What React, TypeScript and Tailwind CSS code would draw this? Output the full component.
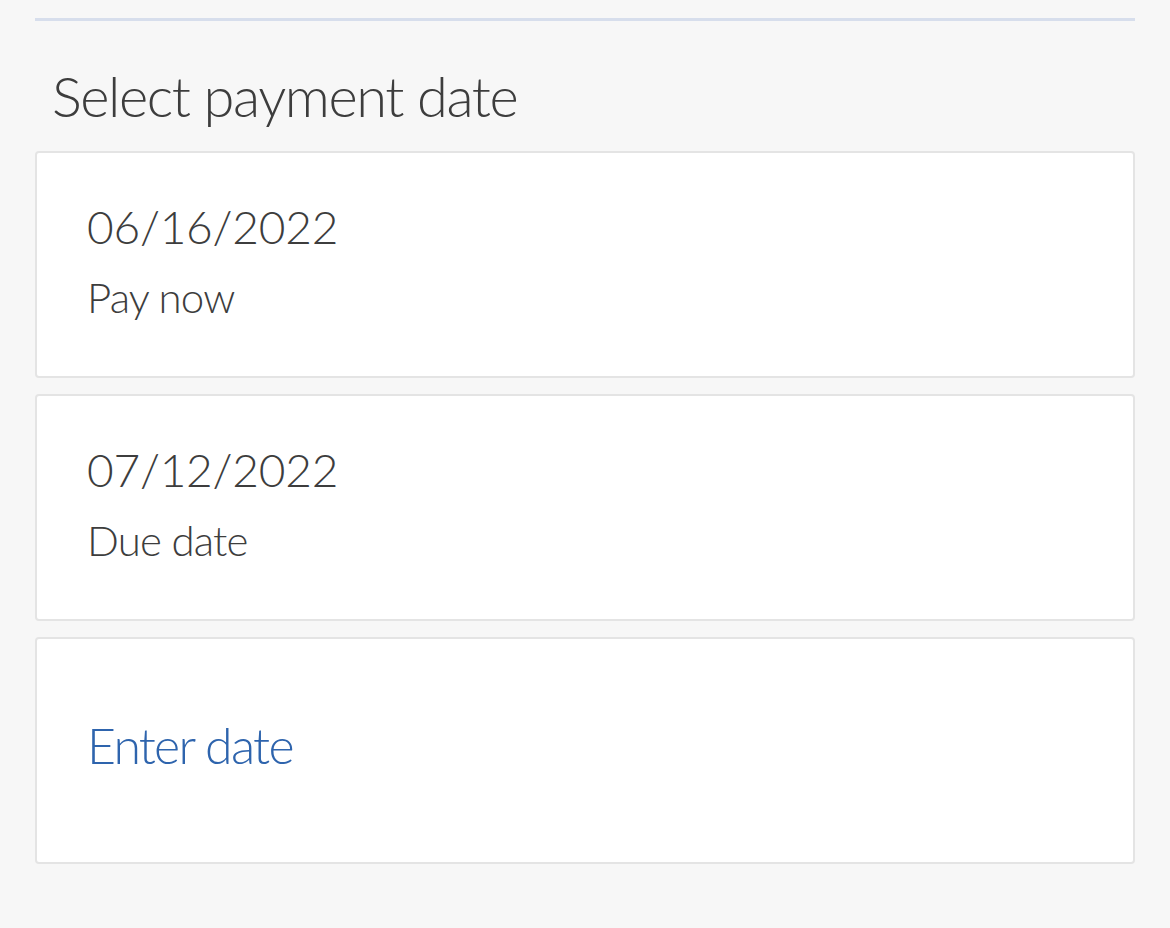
const options = [
  { date: "06/16/2022", label: "Pay now" },
  { date: "07/12/2022", label: "Due date" },
];

export default function App() {
  return (
    <div
      className="min-h-[928px] bg-[#f7f7f7] px-[35px] pt-[18px] text-[#3d3d3d]"
      style={{ fontFamily: 'Lato, "Open Sans", sans-serif' }}
    >
      <div className="h-[3px] bg-[#d7deec]" />

      <h2 className="mt-[47px] pl-[17px] text-[56px] font-light leading-none tracking-[-0.025em]">
        Select payment date
      </h2>

      <div className="mt-[27px] flex flex-col gap-[16px]">
        {options.map((o) => (
          <button
            key={o.date}
            className="flex h-[227px] flex-col items-start rounded-[4px] border-2 border-[#e4e4e4] bg-white pl-[50px] pt-[51px] text-left font-light"
          >
            <span className="text-[46px] leading-none tracking-[-0.005em]">{o.date}</span>
            <span className="mt-[26px] text-[42px] leading-none tracking-[-0.02em]">
              {o.label}
            </span>
          </button>
        ))}

        <button className="flex h-[227px] items-center rounded-[4px] border-2 border-[#e4e4e4] bg-white pb-[12px] pl-[50px] text-left font-light">
          <span className="text-[50px] leading-none tracking-[-0.035em] text-[#2e64ad]">
            Enter date
          </span>
        </button>
      </div>
    </div>
  );
}
